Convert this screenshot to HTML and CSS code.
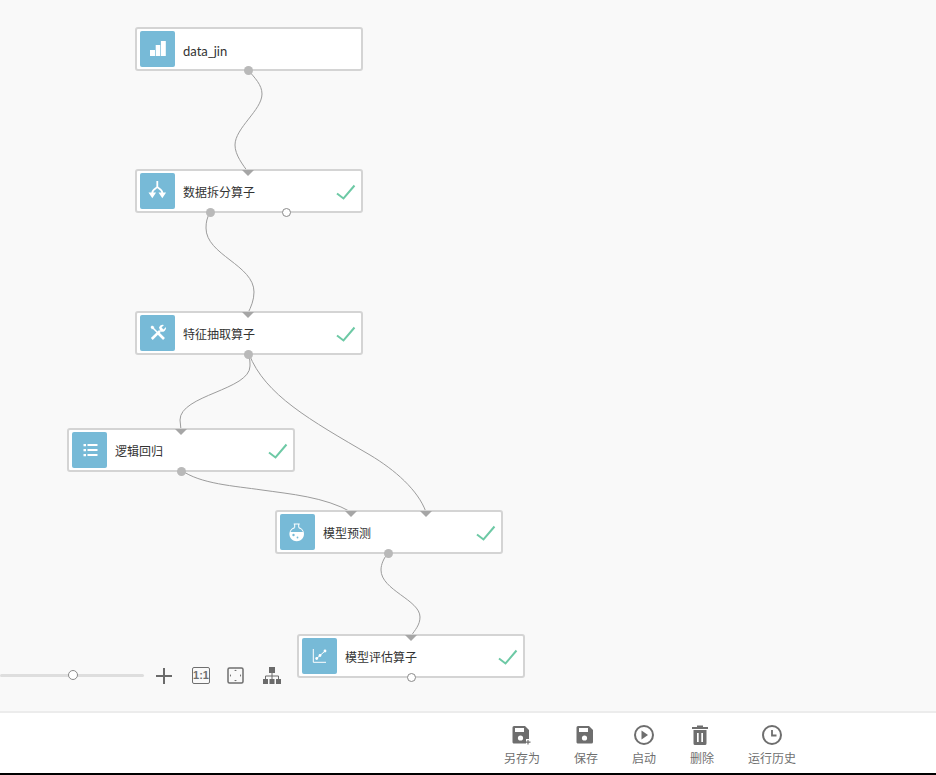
FILE: index.html
```html
<!DOCTYPE html>
<html lang="zh">
<head>
<meta charset="utf-8">
<title>Flow</title>
<link rel="stylesheet" href="styles.css">
</head>
<body>
<main class="canvas">
  <svg class="edges" width="936" height="711" viewBox="0 0 936 711">
    <path d="M248 70C255 78 262 85 262 94C262 110 235 128 235 145C235 155 243 165 248 172"/>
    <path d="M210 212C207 218 206 222 206 228C206 255 254 265 254 292C254 300 251 307 248 313"/>
    <path d="M248 354C250 358 250 362 250 366C250 390 180 395 180 420L181 430"/>
    <path d="M249 354C265 395 310 420 370 455C395 470 418 490 426 512"/>
    <path d="M181 470C200 484 235 486 262 490C290 494 325 497 351 512"/>
    <path d="M388 553C384 558 381 564 381 570C381 590 420 600 420 617C420 625 415 630 411 636"/>
  </svg>

  <div class="node n1">
    <div class="icon"><svg viewBox="0 0 35 36"><path class="f" d="M10 19h5v6h-5zM15.700 14H20.200v11H15.700zM20.900 10h4.900v15h-4.900z"/></svg></div>
    <span class="label latin">data_jin</span>
    <i class="port solid" style="left:113px"></i>
  </div>

  <div class="node n2">
    <i class="arrow" style="left:113px"></i>
    <div class="icon"><svg viewBox="0 0 35 36"><path class="s medium" d="M17.300 8v5.500C17.300 15.500 12.300 16 12.300 20M17.300 13.500C17.300 15.500 22.300 16 22.300 20"/><path class="f" d="M8.500 19.500h7.600l-3.800 5.800zM18.500 19.500h7.600l-3.800 5.800z"/></svg></div>
    <span class="label">数据拆分算子</span>
    <svg class="check" viewBox="0 0 20 16"><path d="M1 9.500l6.500 5L18.500 1.500"/></svg>
    <i class="port solid" style="left:75px"></i>
    <i class="port hollow" style="left:151px"></i>
  </div>

  <div class="node n3">
    <i class="arrow" style="left:113px"></i>
    <div class="icon"><svg viewBox="0 0 35 36"><path class="s" d="M12 12L23.500 23.500"/><path class="s thick" d="M18.500 18.500L24 24"/><path class="s thick" d="M11.800 24L20 15.800"/><path class="f" d="M10.500 12l1.500-1.500 2.500 1.500-2.500 2.500zM19 12.500a4 4 0 0 1 5-2.500l-2.500 2.500 2 2 2.500-2.500a4 4 0 0 1-5.500 4.500z"/></svg></div>
    <span class="label">特征抽取算子</span>
    <svg class="check" viewBox="0 0 20 16"><path d="M1 9.500l6.500 5L18.500 1.500"/></svg>
    <i class="port solid" style="left:113px"></i>
  </div>

  <div class="node n4">
    <i class="arrow" style="left:114px"></i>
    <div class="icon"><svg viewBox="0 0 35 36"><path class="f" d="M11.500 12h2.500v2.200h-2.500zM15.500 12H25.500v2H15.500zM11.500 17h2.500v2.200h-2.500zM15.500 17H25.500v2H15.500zM11.500 22h2.500v2.200h-2.500zM15.500 22H25.500v2H15.500z"/></svg></div>
    <span class="label">逻辑回归</span>
    <svg class="check" viewBox="0 0 20 16"><path d="M1 9.500l6.500 5L18.500 1.500"/></svg>
    <i class="port solid" style="left:114px"></i>
  </div>

  <div class="node n5">
    <i class="arrow" style="left:76px"></i>
    <i class="arrow" style="left:151px"></i>
    <div class="icon"><svg viewBox="0 0 35 36"><path class="s thin" d="M13.700 10h6M14.700 10v3.500M18.700 10v3.500"/><path class="f" d="M14.700 13a7.300 7.300 0 1 0 4 0v1.300a6 6 0 0 1 4.300 3.700H10.400a6 6 0 0 1 4.300-3.700z"/><circle class="b" cx="13.500" cy="21" r="1.200"/><circle class="b" cx="17.500" cy="23.500" r="0.900"/></svg></div>
    <span class="label">模型预测</span>
    <svg class="check" viewBox="0 0 20 16"><path d="M1 9.500l6.500 5L18.500 1.500"/></svg>
    <i class="port solid" style="left:113px"></i>
  </div>

  <div class="node n6">
    <i class="arrow" style="left:114px"></i>
    <div class="icon"><svg viewBox="0 0 35 36"><path class="s thin" d="M11.300 11v13.300H24"/><path class="s thin" d="M14.700 20.500l3.300-3 5-4.500"/><circle class="w" cx="14.700" cy="20.500" r="1.400"/><circle class="w" cx="18" cy="17.500" r="1.400"/><circle class="w" cx="23" cy="13" r="1.400"/></svg></div>
    <span class="label">模型评估算子</span>
    <svg class="check" viewBox="0 0 20 16"><path d="M1 9.500l6.500 5L18.500 1.500"/></svg>
    <i class="port hollow" style="left:114px"></i>
  </div>

  <div class="zoombar">
    <div class="slider"><i class="thumb"></i></div>
    <svg class="plus" width="16" height="16" viewBox="0 0 16 16"><path d="M8 0v16M0 8h16"/></svg>
    <div class="ratio">1:1</div>
    <svg class="fit" width="17" height="17" viewBox="0 0 17 17"><rect x="1" y="1" width="15" height="15" rx="1.500"/><path class="dot" d="M7 4h3L8.500 2.800zM7 13h3l-1.500 1.200zM4 7v3L2.800 8.500zM13 7v3l1.200-1.500z"/></svg>
    <svg class="tree" width="18" height="17" viewBox="0 0 18 17"><path class="fill" d="M6 0h6v6H6zM0 12h5v5H0zM6.500 12h5v5h-5zM13 12h5v5h-5z"/><path class="line" d="M9 6v6M2.500 12V9h13v3"/></svg>
  </div>
</main>

<footer class="toolbar">
  <div class="tool">
    <svg class="nudge" viewBox="0 0 20 20"><path class="ic" d="M3 1h11l4 4v12a1.500 1.500 0 0 1-1.500 1.500h-13A1.500 1.500 0 0 1 1.500 17V2.500A1.500 1.500 0 0 1 3 1z"/><path class="cut" d="M4 3h9v4H4z"/><circle class="cut" cx="9.500" cy="13" r="2.600"/><path class="cut" d="M15 14h5v6h-5z"/><path class="pl" d="M17 15v4.500M15 17.200h4.500"/></svg>
    <span>另存为</span>
  </div>
  <div class="tool">
    <svg class="nudge" viewBox="0 0 20 20"><path class="ic" d="M3 1h11l4 4v12a1.500 1.500 0 0 1-1.500 1.500h-13A1.500 1.500 0 0 1 1.500 17V2.500A1.500 1.500 0 0 1 3 1z"/><path class="cut" d="M4 3h9v4H4z"/><circle class="cut" cx="9.500" cy="13" r="2.600"/></svg>
    <span>保存</span>
  </div>
  <div class="tool">
    <svg viewBox="0 0 20 20"><circle class="ring" cx="10" cy="10" r="9"/><path class="ic" d="M7.500 5.500l6.500 4.500-6.500 4.500z"/></svg>
    <span>启动</span>
  </div>
  <div class="tool">
    <svg class="nudge2" viewBox="0 0 20 20"><path class="ic" d="M2 2h16v2H2zM7 .5h6V2H7zM3.500 5h13v13.500a1.500 1.500 0 0 1-1.500 1.500H5a1.500 1.500 0 0 1-1.500-1.500z"/><path class="cut" d="M7 8h1.700v9H7zM11.300 8H13v9h-1.700z"/></svg>
    <span>删除</span>
  </div>
  <div class="tool">
    <svg viewBox="0 0 20 20"><circle class="ring" cx="10" cy="10" r="9"/><path class="hand" d="M10 5v5.500h4.500"/></svg>
    <span>运行历史</span>
  </div>
</footer>
<div class="baseline"></div>
</body>
</html>
```
FILE: styles.css
```css
html, body { margin: 0; padding: 0; height: 100%; }
body {
  display: flex;
  flex-direction: column;
  overflow: hidden;
  font-family: "Noto Sans CJK SC", "Open Sans", sans-serif;
  background: #fff;
}
.canvas { position: relative; height: 711px; background: #f9f9f9; flex: none; }
.edges { position: absolute; left: 0; top: 0; }
.edges path { fill: none; stroke: #9c9c9c; stroke-width: 1; }

.node {
  position: absolute;
  box-sizing: border-box;
  width: 228px;
  height: 44px;
  padding: 2px 3px;
  display: flex;
  align-items: center;
  background: #fff;
  border: 2px solid #d4d4d4;
  border-radius: 3px;
}
.n1 { left: 135px; top: 27px; }
.n2 { left: 135px; top: 169px; }
.n3 { left: 135px; top: 311px; }
.n4 { left: 67px; top: 428px; }
.n5 { left: 275px; top: 510px; }
.n6 { left: 297px; top: 634px; }

.icon { width: 35px; height: 36px; background: #77bad7; border-radius: 2px; flex: none; }
.icon svg { display: block; width: 35px; height: 36px; }
.icon .f { fill: #fff; }
.icon .s { fill: none; stroke: #fff; stroke-width: 1.500; }
.icon .medium { stroke-width: 1.800; }
.icon .thick { stroke-width: 2.600; }
.icon .thin { stroke-width: 1; }
.icon .b { fill: #77bad7; }
.icon .w { fill: #fff; }

.label { margin: 2px 0 0 8px; font-size: 12px; color: #333; line-height: 16px; white-space: nowrap; }
.latin { font-family: "Lato", sans-serif; font-size: 13px; margin-top: 4px; }

.check { width: 20px; height: 16px; margin: 2px 2px 0 auto; flex: none; }
.check path { fill: none; stroke: #6dc9a5; stroke-width: 2; }

.port { position: absolute; box-sizing: border-box; width: 9px; height: 9px; bottom: -6px; margin-left: -6px; border-radius: 50%; }
.solid { background: #b9b9b9; }
.hollow { background: #fff; border: 1px solid #8a8a8a; }
.arrow {
  position: absolute;
  top: -1px;
  margin-left: -8px;
  width: 0;
  height: 0;
  border-left: 6px solid transparent;
  border-right: 6px solid transparent;
  border-top: 6px solid #a6a6a6;
}

.zoombar {
  position: absolute;
  left: 0;
  top: 667px;
  display: flex;
  align-items: center;
  height: 17px;
}
.slider { position: relative; width: 144px; height: 3px; background: #dedede; border-radius: 2px; }
.thumb { position: absolute; left: 68px; top: -4px; box-sizing: border-box; width: 10px; height: 10px; border: 1px solid #8a8a8a; border-radius: 50%; background: #fff; }
.plus { margin-left: 12px; }
.plus path { fill: none; stroke: #6b6b6b; stroke-width: 2; }
.ratio {
  box-sizing: border-box;
  width: 18px;
  height: 17px;
  margin-left: 20px;
  border: 1.500px solid #6f6f6f;
  border-radius: 2px;
  font-family: "Liberation Sans", sans-serif;
  font-size: 11px;
  font-weight: 700;
  line-height: 14px;
  text-align: center;
  color: #6f6f6f;
}
.fit { margin-left: 17px; }
.fit rect { fill: none; stroke: #6f6f6f; stroke-width: 1.500; }
.fit .dot { fill: #6f6f6f; }
.tree { margin-left: 19px; }
.tree .fill { fill: #6b6b6b; }
.tree .line { fill: none; stroke: #6b6b6b; stroke-width: 1; }

.toolbar {
  box-sizing: border-box;
  flex: none;
  height: 62px;
  border-top: 2px solid #ececec;
  padding: 12px 0 0 504px;
  display: flex;
  gap: 34px;
  background: #fff;
}
.tool { display: flex; flex-direction: column; align-items: center; font-size: 12px; line-height: 17px; color: #6f6f6f; }
.tool svg { width: 20px; height: 20px; display: block; margin-bottom: 4px; }
.tool .nudge { margin-right: 2px; }
.tool .nudge2 { margin-right: 4px; }
.tool .ic { fill: #6e6e6e; }
.tool .cut { fill: #fff; }
.tool .pl { fill: none; stroke: #6e6e6e; stroke-width: 1.200; }
.tool .ring { fill: none; stroke: #6e6e6e; stroke-width: 2; }
.tool .hand { fill: none; stroke: #6e6e6e; stroke-width: 1.800; }
.baseline { flex: 1; background: #000; }
```
